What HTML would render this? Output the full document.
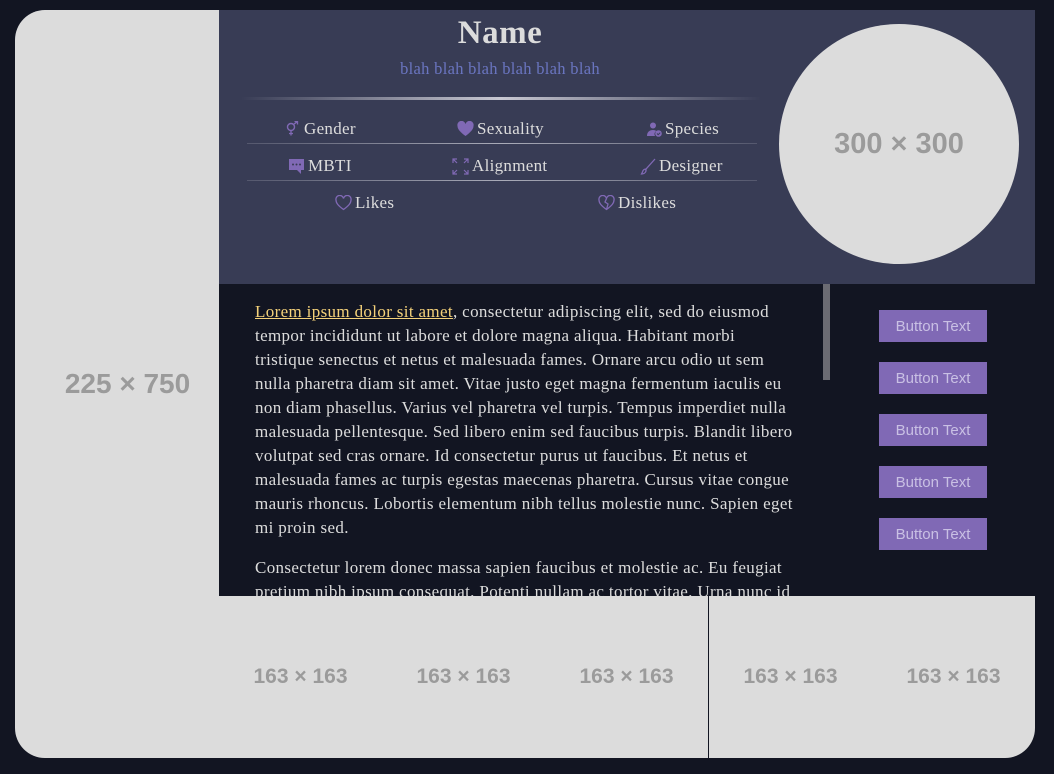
<!DOCTYPE html>
<html><head><meta charset="utf-8"><style>
*{margin:0;padding:0;box-sizing:border-box}
html,body{width:1054px;height:774px;background:#121522;overflow:hidden;font-family:"Liberation Serif",serif}
.wrap{position:absolute;left:15px;top:10px;width:1020px;height:748px;background:#dcdcdc;border-radius:30px;overflow:hidden}
.ph{position:absolute;color:#9b9b9b;font-family:"Liberation Sans",sans-serif;font-weight:bold;display:flex;align-items:center;justify-content:center}
.head{position:absolute;left:219px;top:10px;width:816px;height:274px;background:#383c55}
.circle{position:absolute;left:560px;top:14px;width:240px;height:240px;border-radius:50%;background:#dcdcdc;color:#9b9b9b;font:bold 29px "Liberation Sans",sans-serif;display:flex;align-items:center;justify-content:center}
.name{position:absolute;left:0;width:562px;top:5px;text-align:center;color:#dcdcdc;font-weight:bold;font-size:33px;letter-spacing:0.5px}
.sub{position:absolute;left:0;width:562px;top:49px;text-align:center;color:#6a75c0;font-size:16.5px;letter-spacing:0.3px}
.hr{position:absolute;left:22px;width:520px;top:87px;height:3px;background:linear-gradient(90deg,rgba(200,200,210,0),#c8c8d2 50%,rgba(200,200,210,0))}
.hl{position:absolute;left:28px;width:510px;height:1px;background:linear-gradient(90deg,rgba(200,200,210,0.2),#a9abb8 50%,rgba(200,200,210,0.2))}
.st{position:absolute;color:#dcdcdc;font-size:17px;letter-spacing:0.3px;white-space:nowrap;display:flex;align-items:center;gap:3px}
.st svg{fill:#8069b5}
.content{position:absolute;left:219px;top:284px;width:816px;height:312px;background:#121522;overflow:hidden}
.txt{position:absolute;left:36px;top:16px;color:#dcdcdc;font-size:17px;letter-spacing:0.35px;line-height:24px;white-space:nowrap}
.txt a{color:#f5d27a;text-decoration:underline}
.txt p{margin-bottom:16px}
.sb{position:absolute;left:604px;top:0;width:7px;height:96px;background:#6b6b73}
.btn{position:absolute;left:660px;width:108px;height:32px;background:#8069b5;color:#c9c0e4;font:15px "Liberation Sans",sans-serif;display:flex;align-items:center;justify-content:center}
.vl{position:absolute;left:708px;top:596px;width:1px;height:162px;background:#121522}
</style></head><body>
<div class="wrap"></div>
<div class="ph" style="left:15px;top:10px;width:225px;height:748px;font-size:28px">225 × 750</div>
<div class="ph" style="left:219px;top:596px;width:163px;height:162px;font-size:21px">163 × 163</div>
<div class="ph" style="left:382px;top:596px;width:163px;height:162px;font-size:21px">163 × 163</div>
<div class="ph" style="left:545px;top:596px;width:163px;height:162px;font-size:21px">163 × 163</div>
<div class="ph" style="left:709px;top:596px;width:163px;height:162px;font-size:21px">163 × 163</div>
<div class="ph" style="left:872px;top:596px;width:163px;height:162px;font-size:21px">163 × 163</div>
<div class="vl"></div>
<div class="head">
<div class="name">Name</div>
<div class="sub">blah blah blah blah blah blah</div>
<div class="hr"></div>
<div class="st" style="left:66px;top:109px"><svg width="16" height="16" viewBox="0 0 16 16" style="fill:none"><circle cx="6" cy="6" r="3.5" fill="none" stroke="#8069b5" stroke-width="1.4"/><path d="M6 9.5v5M4 12.5h4M8.5 3.5l4-3M9.5 0.5h3v3" fill="none" stroke="#8069b5" stroke-width="1.3"/></svg>Gender</div>
<div class="st" style="left:238px;top:109px"><svg width="17" height="16" viewBox="0 0 17 16"><path d="M8.5 15C3 11 0.5 8 0.5 5A4 4 0 0 1 8.5 3 4 4 0 0 1 16.5 5C16.5 8 14 11 8.5 15Z"/></svg>Sexuality</div>
<div class="st" style="left:428px;top:109px"><svg width="15" height="15" viewBox="0 0 15 15"><circle cx="6" cy="3.5" r="3"/><path d="M0 14c0-4 2.5-6 6-6 1.5 0 2.5.4 3.3 1A3.5 3.5 0 0 0 8 14Z"/><circle cx="11.5" cy="11.5" r="3.3"/><path d="M10 11.5l1.2 1.2 2-2" style="stroke:#383c55;fill:none" stroke-width="1"/></svg>Species</div>
<div class="st" style="left:69px;top:146px"><svg width="17" height="17" viewBox="0 0 17 17"><path d="M1 1h15v11h-3v4l-4-4H1Z"/><circle cx="5" cy="6.5" r="1" style="fill:#383c55"/><circle cx="8.5" cy="6.5" r="1" style="fill:#383c55"/><circle cx="12" cy="6.5" r="1" style="fill:#383c55"/></svg>MBTI</div>
<div class="st" style="left:233px;top:146px"><svg width="17" height="17" viewBox="0 0 17 17" style="fill:none" stroke="#8069b5" stroke-width="1.2"><path d="M1 5V1h4M1 1l4 4M16 5V1h-4M16 1l-4 4M1 12v4h4M1 16l4-4M16 12v4h-4M16 16l-4-4"/></svg>Alignment</div>
<div class="st" style="left:421px;top:146px"><svg width="16" height="17" viewBox="0 0 16 17" style="fill:none" stroke="#8069b5" stroke-width="1.3"><path d="M15 1L6 11l-1 1M6 11c-2 0-3 1-3.5 3L1.5 16c2 0 4-1 4.5-3Z"/></svg>Designer</div>
<div class="st" style="left:116px;top:183px"><svg width="17" height="16" viewBox="0 0 17 16" style="fill:none"><path d="M8.5 14.5C3 10.5 1 8 1 5A3.6 3.6 0 0 1 8.5 3.5 3.6 3.6 0 0 1 16 5C16 8 14 10.5 8.5 14.5Z" stroke="#8069b5" stroke-width="1.3"/></svg>Likes</div>
<div class="st" style="left:379px;top:183px"><svg width="17" height="16" viewBox="0 0 17 16" style="fill:none" stroke="#8069b5" stroke-width="1.3"><path d="M8.5 14.5C3 10.5 1 8 1 5A3.6 3.6 0 0 1 8.5 3.5 3.6 3.6 0 0 1 16 5C16 8 14 10.5 8.5 14.5Z"/><path d="M8.5 3.5L7 7l3 2-1.5 5.5"/></svg>Dislikes</div>
<div class="hl" style="top:133px"></div>
<div class="hl" style="top:170px"></div>
<div class="circle">300 × 300</div>
</div>
<div class="content">
<div class="txt">
<p><a>Lorem ipsum dolor sit amet</a>, consectetur adipiscing elit, sed do eiusmod<br>tempor incididunt ut labore et dolore magna aliqua. Habitant morbi<br>tristique senectus et netus et malesuada fames. Ornare arcu odio ut sem<br>nulla pharetra diam sit amet. Vitae justo eget magna fermentum iaculis eu<br>non diam phasellus. Varius vel pharetra vel turpis. Tempus imperdiet nulla<br>malesuada pellentesque. Sed libero enim sed faucibus turpis. Blandit libero<br>volutpat sed cras ornare. Id consectetur purus ut faucibus. Et netus et<br>malesuada fames ac turpis egestas maecenas pharetra. Cursus vitae congue<br>mauris rhoncus. Lobortis elementum nibh tellus molestie nunc. Sapien eget<br>mi proin sed.</p>
<p>Consectetur lorem donec massa sapien faucibus et molestie ac. Eu feugiat<br>pretium nibh ipsum consequat. Potenti nullam ac tortor vitae. Urna nunc id</p>
</div>
<div class="sb"></div>
<div class="btn" style="top:26px">Button Text</div>
<div class="btn" style="top:78px">Button Text</div>
<div class="btn" style="top:130px">Button Text</div>
<div class="btn" style="top:182px">Button Text</div>
<div class="btn" style="top:234px">Button Text</div>
</div>
</body></html>
